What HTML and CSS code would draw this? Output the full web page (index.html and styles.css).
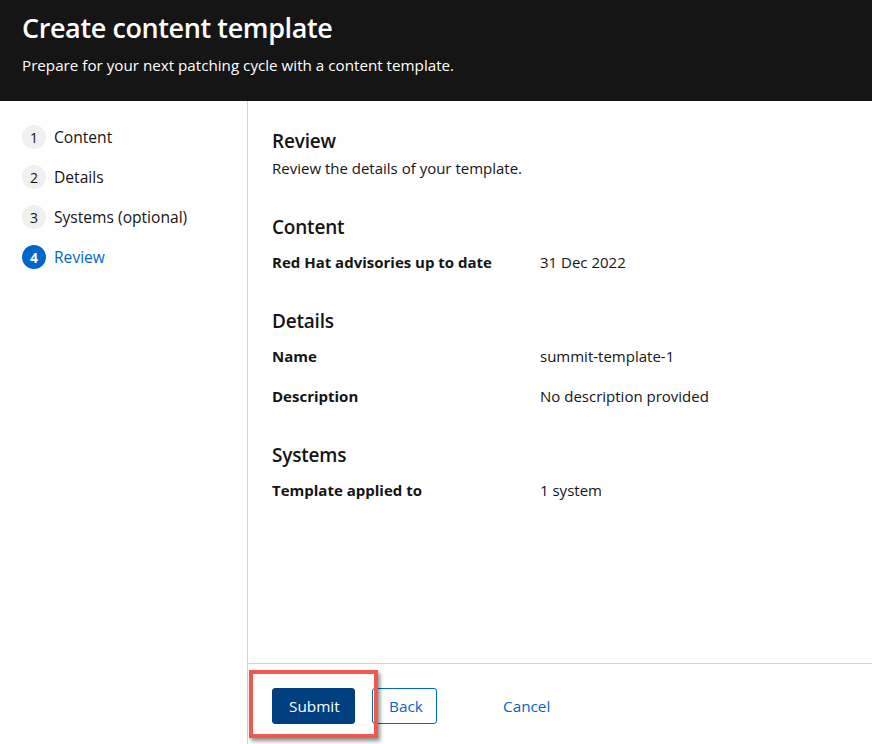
FILE: index.html
```html
<!DOCTYPE html>
<html lang="en">
<head>
<meta charset="utf-8">
<title>Create content template</title>
<link rel="stylesheet" href="styles.css">
</head>
<body>
<div class="wizard">
  <header class="wizard-header">
    <h1 class="wizard-title">Create content template</h1>
    <p class="wizard-desc">Prepare for your next patching cycle with a content template.</p>
  </header>
  <div class="wizard-body">
    <nav class="wizard-nav">
      <ol class="nav-list">
        <li class="nav-item"><span class="nav-num">1</span><span class="nav-text">Content</span></li>
        <li class="nav-item"><span class="nav-num">2</span><span class="nav-text">Details</span></li>
        <li class="nav-item"><span class="nav-num">3</span><span class="nav-text">Systems (optional)</span></li>
        <li class="nav-item current"><span class="nav-num">4</span><span class="nav-text">Review</span></li>
      </ol>
    </nav>
    <div class="wizard-main">
      <main class="wizard-content">
        <h2 class="section-title first">Review</h2>
        <p class="section-desc">Review the details of your template.</p>

        <h3 class="section-title">Content</h3>
        <dl class="dlist">
          <div class="drow"><dt>Red Hat advisories up to date</dt><dd>31 Dec 2022</dd></div>
        </dl>

        <h3 class="section-title">Details</h3>
        <dl class="dlist">
          <div class="drow"><dt>Name</dt><dd>summit-template-1</dd></div>
          <div class="drow"><dt>Description</dt><dd>No description provided</dd></div>
        </dl>

        <h3 class="section-title">Systems</h3>
        <dl class="dlist">
          <div class="drow"><dt>Template applied to</dt><dd>1 system</dd></div>
        </dl>
      </main>
      <footer class="wizard-footer">
        <button class="btn btn-primary" type="button">Submit</button>
        <button class="btn btn-secondary" type="button">Back</button>
        <button class="btn btn-link" type="button">Cancel</button>
        <span class="highlight" aria-hidden="true"></span>
      </footer>
    </div>
  </div>
</div>
</body>
</html>
```
FILE: styles.css
```css
* { box-sizing: border-box; }
html, body { margin: 0; padding: 0; }
body {
  font-family: "Open Sans", "Liberation Sans", sans-serif;
  color: #151515;
  background: #fff;
  width: 872px;
  height: 744px;
  overflow: hidden;
}
.wizard {
  display: flex;
  flex-direction: column;
  height: 744px;
}
.wizard-header {
  background: #151515;
  color: #fff;
  height: 101px;
  padding: 11px 22px 0;
  flex: none;
}
.wizard-title {
  margin: 0;
  font-size: 27px;
  font-weight: 600;
  line-height: 34px;
  letter-spacing: -0.4px;
}
.wizard-desc {
  margin: 8px 0 0;
  font-size: 15.2px;
  line-height: 24px;
}
.wizard-body {
  flex: 1;
  display: flex;
  min-height: 0;
}
.wizard-nav {
  width: 248px;
  flex: none;
  border-right: 1px solid #d2d2d2;
  padding: 24px 0 0 22px;
}
.nav-list {
  list-style: none;
  margin: 0;
  padding: 0;
  display: flex;
  flex-direction: column;
  gap: 16px;
}
.nav-item {
  display: flex;
  align-items: center;
  gap: 8px;
  height: 24px;
  font-size: 15.6px;
}
.nav-num {
  width: 24px;
  height: 24px;
  border-radius: 50%;
  background: #f0f0f0;
  color: #151515;
  font-size: 14px;
  display: flex;
  align-items: center;
  justify-content: center;
}
.nav-item.current .nav-num {
  background: #0066cc;
  color: #fff;
  font-weight: 700;
}
.nav-item.current .nav-text { color: #0066cc; }
.wizard-main {
  flex: 1;
  display: flex;
  flex-direction: column;
  min-width: 0;
}
.wizard-content {
  flex: 1;
  padding: 0 24px;
}
.section-title {
  margin: 34px 0 0;
  font-size: 19px;
  font-weight: 600;
  line-height: 26px;
  letter-spacing: -0.2px;
}
.section-title.first { margin-top: 27px; }
.section-desc {
  margin: 2px 0 0;
  font-size: 15px;
  line-height: 24px;
}
.dlist {
  margin: 10px 0 0;
  display: flex;
  flex-direction: column;
  gap: 16px;
}
.drow {
  display: grid;
  grid-template-columns: 268px 1fr;
  font-size: 15px;
  line-height: 24px;
}
.drow dt { font-weight: 700; }
.drow dd { margin: 0; }
.wizard-footer {
  position: relative;
  flex: none;
  height: 81px;
  border-top: 1px solid #d2d2d2;
  padding: 24px 24px 0;
  display: flex;
  align-items: flex-start;
  gap: 17px;
}
.btn {
  font-family: inherit;
  font-size: 15.3px;
  height: 36px;
  border-radius: 3px;
  padding: 0 16px;
  cursor: pointer;
  line-height: 34px;
}
.btn-primary {
  background: #004080;
  color: #fff;
  border: 1px solid #004080;
  width: 83px;
}
.btn-secondary {
  background: #fff;
  color: #0066cc;
  border: 1px solid #0066cc;
  width: 65px;
}
.btn-link {
  background: transparent;
  border: 1px solid transparent;
  color: #0066cc;
  margin-left: 48px;
  padding: 0 0;
}
.highlight {
  position: absolute;
  left: 1px;
  top: 6px;
  width: 129px;
  height: 68px;
  border: 4px solid #f05a4a;
  box-shadow: 2px 3px 4px rgba(0, 0, 0, 0.45);
  pointer-events: none;
}
```
